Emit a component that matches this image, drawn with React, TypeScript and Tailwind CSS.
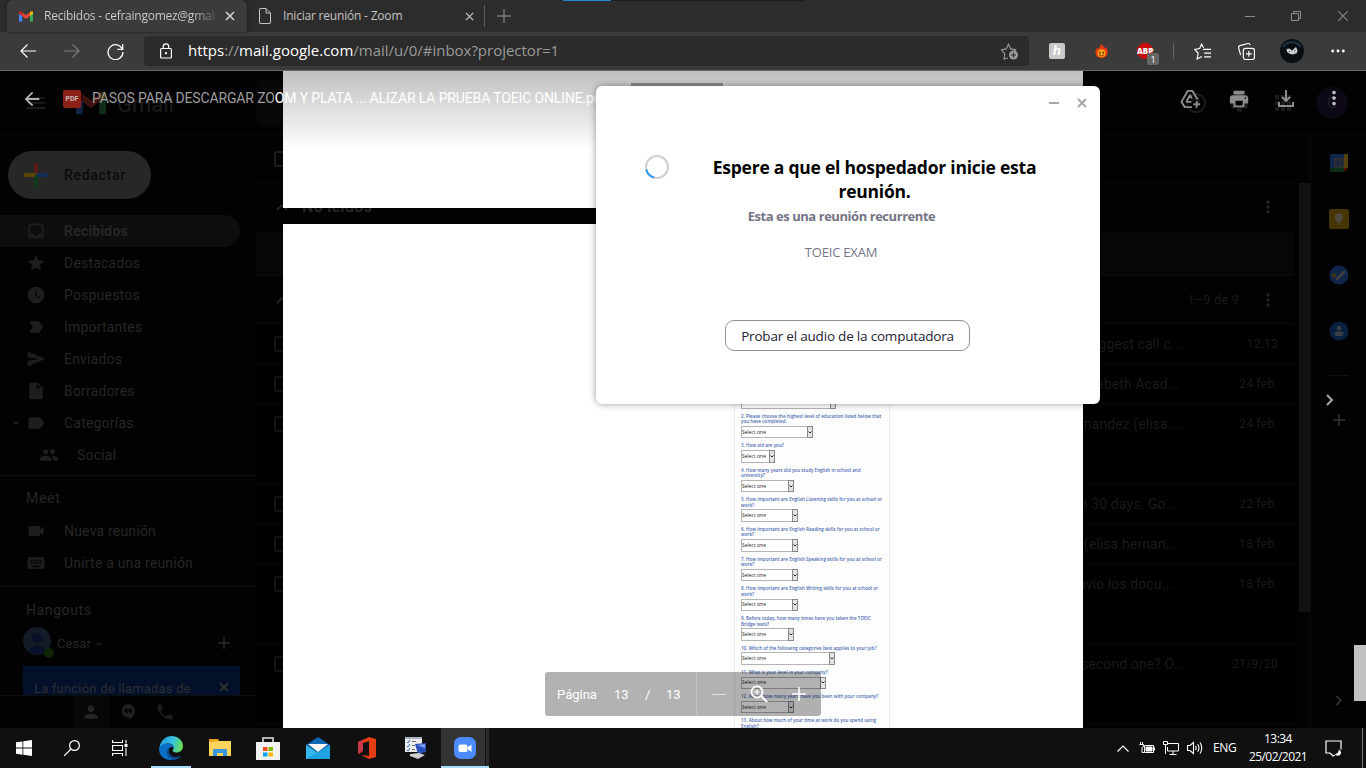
import React from "react";
import type { ReactNode } from "react";
import {
  MdApps, MdArrowDropDown, MdInbox, MdInsertDriveFile, MdKeyboard, MdLabel,
  MdLabelImportant, MdLightbulb, MdMoreVert, MdPeople, MdPerson, MdPhone, MdPrint, MdSend, MdSettings,
  MdStar, MdVideocam, MdWatchLater, MdHelpOutline, MdMenu, MdArrowBack,
} from "react-icons/md";

const ui = "font-['Open_Sans',sans-serif]";
const gm = "font-[Roboto,sans-serif]";

function GmailM({ className }: { className: string }) {
  return (
    <svg viewBox="0 0 16 12" className={className}>
      <path d="M0 2v9a1 1 0 0 0 1 1h2.6V4.5z" fill="#4285f4" />
      <path d="M16 2v9a1 1 0 0 1-1 1h-2.6V4.5z" fill="#34a853" />
      <path d="M12.4 1.2v4.3L16 2.8V1.5A1.4 1.4 0 0 0 13.6.4z" fill="#fbbc04" />
      <path d="M3.6 5.5V1.2L8 4.5l4.4-3.3v4.3L8 8.8z" fill="#ea4335" />
      <path d="M0 1.5v1.3l3.6 2.7V1.2L2.4.4A1.4 1.4 0 0 0 0 1.5z" fill="#c5221f" />
    </svg>
  );
}

function Cross({ className, w = 1.4 }: { className: string; w?: number }) {
  return (
    <svg viewBox="0 0 10 10" className={className} fill="none" stroke="currentColor" strokeWidth={w}>
      <path d="M1 1l8 8M9 1L1 9" />
    </svg>
  );
}

function TabStrip() {
  return (
    <div className={`${ui} relative flex h-8 bg-[#2c2c2c] pl-[7px] text-[12px] tracking-[-0.2px] text-[#c4c4c4]`}>
      <div className="absolute left-[563px] top-0 h-px w-12 bg-[#2488d0]" />
      <div className="absolute left-[611px] top-0 h-px w-[193px] bg-[#1c1c1c]" />
      <div className="flex w-60 items-center rounded-t-md bg-[#3b3b3b] pl-3 shadow-[0_0_3px_#1a1a1a]">
        <GmailM className="h-[11px] w-[14px]" />
        <span className="ml-[11px] w-[175px] overflow-hidden whitespace-nowrap bg-gradient-to-r from-[#d0d0d0] from-85% to-[#444] bg-clip-text tracking-[-0.25px] text-transparent">
          Recibidos - cefraingomez@gmai
        </span>
        <Cross className="ml-[6px] size-[10px] text-[#e0e0e0]" />
      </div>
      <div className="flex w-[238px] items-center border-r border-[#5c5c5c] pl-3 [border-image:linear-gradient(transparent_6px,#5c5c5c_6px,#5c5c5c_26px,transparent_26px)_1]">
        <svg viewBox="0 0 12 16" className="h-4 w-3 fill-none stroke-[#c4c4c4]">
          <path d="M.5 2A1.3 1.3 0 0 1 2 .5h5L11.500 5v9a1.300 1.300 0 0 1-1.500 1.500H2A1.300 1.300 0 0 1 .5 14zM7 .5V5h4.500" />
        </svg>
        <span className="ml-3 w-[182px]">Iniciar reunión - Zoom</span>
        <Cross className="size-[9px] text-[#c4c4c4]" />
      </div>
      <svg viewBox="0 0 14 14" className="ml-[12px] mt-[9px] size-[14px] stroke-[#999]"><path d="M7 0v14M0 7h14" /></svg>
      <div className="ml-auto flex items-center pr-[17px] text-[#8d8d8d]">
        <svg viewBox="0 0 10 10" className="mr-9 size-[10px] stroke-current"><path d="M0 5.500h10" /></svg>
        <svg viewBox="0 0 10 10" className="mr-9 size-[10px] fill-none stroke-current"><path d="M.5 2.500h7v7h-7zM2.500 2.500v-2h7v7h-2" /></svg>
        <Cross className="size-[12px]" w={0.9} />
      </div>
    </div>
  );
}

function Toolbar() {
  return (
    <div className={`${ui} flex h-[39px] items-center border-b border-[#666] bg-[#3b3b3b] text-white`}>
      <svg viewBox="0 0 16 16" className="ml-5 size-4 fill-none stroke-white"><path d="M16 8H1M7.500 1.500L1 8l6.500 6.500" strokeWidth="1.200" /></svg>
      <svg viewBox="0 0 16 16" className="ml-7 size-4 fill-none stroke-[#7c7c7c]"><path d="M0 8h15M8.500 1.500L15 8l-6.500 6.500" strokeWidth="1.200" /></svg>
      <svg viewBox="0 0 16 16" className="ml-[27px] size-[17px] fill-none stroke-white"><path d="M14.500 6A7 7 0 1 0 15 8.500M14.800 1v5H9.800" strokeWidth="1.200" /></svg>
      <div className="ml-5 flex h-[30px] w-[885px] items-center rounded bg-[#2b2b2b]">
        <svg viewBox="0 0 12 16" className="ml-4 h-4 w-3 fill-none stroke-white">
          <rect x=".6" y="5.500" width="10.800" height="9.500" rx="1" strokeWidth="1.200" />
          <path d="M3.300 5.500V3.500a2.700 2.700 0 0 1 5.400 0v2" strokeWidth="1.200" /><rect x="5.500" y="9.700" width="1" height="1" />
        </svg>
        <div className="mb-[2px] ml-4 whitespace-nowrap text-[15px] tracking-[-0.01px]">
          https<span className="text-[#9a9a9a]">://</span>mail.google.com<span className="text-[#9a9a9a]">/mail/u/0/#inbox?projector=1</span>
        </div>
        <svg viewBox="0 0 18 17" className="ml-auto mr-[10px] h-[17px] w-[18px] fill-none stroke-[#9a9a9a]">
          <path d="M7 15l-4 1 .8-5L.5 6.700l4.700-.8L7.500 1l2.200 4.900 5 .8-2 2" strokeWidth="1.100" />
          <circle cx="12.500" cy="12" r="4.500" className="fill-[#9a9a9a] stroke-none" /><path d="M12.500 9.500v5M10 12h5" className="stroke-[#2b2b2b]" />
        </svg>
      </div>
      <div className="ml-5 grid size-4 place-items-center rounded-[2px] bg-[#c8c8c8] pb-0.5 font-['Liberation_Serif'] text-[15px] font-bold italic leading-none">h</div>
      <svg viewBox="0 0 14 16" className="ml-[30px] h-4 w-[13px]">
        <path d="M6 0c3 3 4 4 5 5l1-1c2 3 2 5 1.500 7-1 3-3.500 4.500-6.500 4.500S1 14 .5 11C0 8 1.500 5.500 3 4l.8 2C5.500 4 6 2 6 0z" fill="#e8380d" />
        <circle cx="7" cy="10.500" r="4.300" fill="#f9a11b" /><circle cx="5.200" cy="9.800" r=".9" fill="#5b2108" /><circle cx="8.900" cy="9.800" r=".9" fill="#5b2108" />
        <path d="M4.500 12c1.500 1.700 3.500 1.700 5 0" stroke="#5b2108" fill="none" />
      </svg>
      <div className="relative ml-[29px] grid size-4 place-items-center">
        <svg viewBox="0 0 16 16" className="absolute size-4"><path d="M5 0h6l5 5v6l-5 5H5l-5-5V5z" fill="#c70d0d" /></svg>
        <span className="relative text-[8px] font-extrabold leading-none">ABP</span>
        <span className="absolute left-[10px] top-[10px] grid h-3 w-3 place-items-center rounded-[2px] bg-[#666] text-[9px] leading-none">1</span>
      </div>
      <div className="ml-5 h-4 w-px bg-[#666]" />
      <svg viewBox="0 0 16 16" className="ml-5 size-[17px] fill-none stroke-white"><path d="M9 4.500L7.200 1 5.300 5.200.6 6l3.300 3.400L3 15l4.500-2.300M8.500 6H16M9.500 9.500H16M9.500 13H16" strokeWidth="1.100" /></svg>
      <svg viewBox="0 0 16 16" className="ml-[27px] size-[17px] fill-none stroke-white"><rect x="5" y="5" width="10.500" height="10.500" rx="2" strokeWidth="1.100" /><path d="M10.200 7.500v5.500M7.500 10.200H13M2.500 11.500L.6 4.500Q.4 3 1.800 2.500L9.500.5q1.500-.2 2 1.500" strokeWidth="1.100" /></svg>
      <svg viewBox="0 0 24 24" className="ml-[25px] size-6">
        <circle cx="12" cy="12" r="12" fill="#080d12" /><path d="M3 8A11 11 0 0 1 21 8" stroke="#223541" strokeWidth="2" fill="none" />
        <path d="M6.500 10l3-.5 2.500 2 4-3.500 1.500 3-.5 3-4 1.500-3-.5-3-2z" fill="#c9cccd" /><path d="M9 12.500h1M14 12l1.500-.5" stroke="#555" />
      </svg>
      <svg viewBox="0 0 14 4" className="ml-[27px] h-1 w-[14px] fill-white"><circle cx="1.700" cy="2" r="1.400" /><circle cx="7" cy="2" r="1.400" /><circle cx="12.300" cy="2" r="1.400" /></svg>
    </div>
  );
}

const folders: [ReactNode, string][] = [
  [<MdInbox />, "Recibidos"], [<MdStar />, "Destacados"], [<MdWatchLater />, "Pospuestos"], [<MdLabelImportant />, "Importantes"],
  [<MdSend />, "Enviados"], [<MdInsertDriveFile />, "Borradores"], [<MdLabel />, "Categorías"],
];

function Row({ icon, label, on }: { icon: ReactNode; label: string; on?: boolean }) {
  return (
    <div className={`flex h-8 w-60 shrink-0 items-center rounded-r-full pl-[26px] ${on ? "bg-[#0d0d0d] font-bold" : ""}`}>
      <span className="text-[20px] text-[#1e1e1e]">{icon}</span>
      <span className="ml-[18px] whitespace-nowrap">{label}</span>
    </div>
  );
}

function Sidebar() {
  return (
    <div className={`${gm} flex w-64 shrink-0 flex-col text-[14px] tracking-[0.2px] text-[#262626]`}>
      <div className="ml-2 mt-4 flex h-12 w-[143px] shrink-0 items-center rounded-full bg-[#272727] pl-4 text-[#0b0b0b]">
        <svg viewBox="0 0 24 24" className="size-6"><path d="M10 0h4v12h-4z" fill="#5b1814" /><path d="M12 10h12v4H12z" fill="#142d57" /><path d="M10 12h4v12h-4z" fill="#0f3a1c" /><path d="M0 10h13l-3 4H0z" fill="#5a4404" /></svg>
        <span className="ml-4 font-medium tracking-[0.7px]">Redactar</span>
      </div>
      <div className="mt-4">
        {folders.map(([icon, label], i) => (
          <div key={label} className="relative">
            <Row icon={icon} label={label} on={i === 0} />
            {i === 6 && <MdArrowDropDown className="absolute left-[8px] top-2 text-[16px] text-[#202020]" />}
          </div>
        ))}
        <div className="flex h-8 items-center pl-[39px]"><MdPeople className="text-[20px] text-[#1e1e1e]" /><span className="ml-[18px]">Social</span></div>
      </div>
      <div className="mt-1 h-px shrink-0 bg-[#0d0d0d]" />
      <div className="flex h-[39px] shrink-0 items-center pl-[26px] pt-[6px] tracking-[0.7px]">Meet</div>
      <Row icon={<MdVideocam />} label="Nueva reunión" />
      <Row icon={<MdKeyboard />} label="Unirte a una reunión" />
      <div className="mt-[7px] h-px shrink-0 bg-[#0d0d0d]" />
      <div className="flex h-9 shrink-0 items-center pl-[26px] pt-[10px] tracking-[0.6px]">Hangouts</div>
      <div className="mt-1 flex h-7 shrink-0 items-center pl-[23px]">
        <div className="relative grid size-7 place-items-center rounded-full bg-[#141a26]">
          <svg viewBox="0 0 28 28" className="size-7"><circle cx="14" cy="11" r="5" fill="#08102a" /><path d="M5 23q9-9 18 0-9 9-18 0z" fill="#08102a" /></svg>
          <span className="absolute left-[21px] top-[21px] size-[10px] rounded-full bg-[#0d2405]" />
        </div>
        <span className="ml-[6px] mt-[5px] text-[13px] tracking-[0.1px]">Cesar</span><MdArrowDropDown className="mt-[5px] text-[16px] text-[#181818]" />
        <svg viewBox="0 0 12 12" className="ml-[111px] mt-1 size-3 stroke-[#2a2a2a]" strokeWidth="1.500"><path d="M6 0v12M0 6h12" /></svg>
      </div>
      <div className="ml-[23px] mt-[11px] flex h-[29px] w-[217px] shrink-0 items-start justify-between bg-[#03102a] px-[11px] pt-[13px] text-[13px] text-[#2c2f36]">
        <span className="h-4 leading-[19px]">La función de llamadas de</span><Cross className="mt-[3px] size-[10px] text-[#303030]" w={1.8} />
      </div>
      <div className="flex flex-1 border-t border-[#0d0d0d] pl-[73px] text-[20px] text-[#262626]">
        <div className="grid w-9 place-items-center bg-[#070707]"><MdPerson /></div>
        <div className="grid w-[37px] place-items-center">
          <svg viewBox="0 0 14 16" className="h-4 w-[14px]"><path d="M7 0a7 7 0 0 1 7 7c0 4-3 7-6 9v-2.500A6.700 6.700 0 0 1 7 0z" fill="#202020" /><path d="M3.500 5h3v4L5 10V8H3.500zM7.800 5h3v4L9.300 10V8H7.800z" fill="#020202" /></svg>
        </div>
        <div className="grid w-[37px] place-items-center text-[#1c1c1c]"><MdPhone /></div>
      </div>
    </div>
  );
}

const mails: [string, string, string, string][] = [
  ["suggest call c...", "12:13", "h-10", "mr-[112px]"],
  ["Elizabeth Acad...", "24 feb.", "h-10", "mr-[115px]"],
  ["Hernandez (elisa....", "24 feb.", "h-20", "mr-[111px]"],
  ["in 30 days. Go...", "22 feb.", "h-10", "mr-[117px]"],
  ["(elisa.hernan...", "18 feb.", "h-10", "mr-[117px]"],
  ["Envío los docu...", "18 feb.", "h-20", "mr-[121px]"],
  ["second one? O...", "21/9/20", "h-20", "mr-[109px]"],
];

const Box = ({ c }: { c: string }) => <div className={`ml-[18px] size-4 rounded-[2px] border-2 ${c}`} />;
const Up = () => <svg viewBox="0 0 12 8" className="ml-5 h-2 w-3 fill-none stroke-[#242424]" strokeWidth="1.800"><path d="M1 7l5-5 5 5" /></svg>;

function MailList() {
  return (
    <div className={`${gm} flex w-[1038px] flex-col text-[14px] text-[#1a1a1a]`}>
      <div className="flex h-12 items-center border-b border-[#0a0a0a]"><Box c="border-[#1c1c1c]" /></div>
      <div className="flex h-12 items-center"><Up /><span className="ml-[14px] text-[16px] font-medium tracking-[0.3px] text-[#2a2a2a]">No leídos</span><MdMoreVert className="ml-auto mr-4 text-[20px] text-[#242424]" /></div>
      <div className="h-[45px] border-b border-[#0d0d0d] bg-[#060606]" />
      <div className="flex h-12 items-center border-b border-[#0a0a0a]"><Up /><span className="ml-auto mr-[19px] text-[12px] tracking-[0.5px]">1–9 de 9</span><MdMoreVert className="mr-4 text-[20px] text-[#242424]" /></div>
      {mails.map(([t, d, h, m], i) => (
        <div key={i} className={`${h} shrink-0 border-b border-[#090909] bg-black`}>
          <div className="flex h-10 items-center">
            <Box c="border-[#121212]" />
            <div className="flex flex-1 justify-end whitespace-nowrap tracking-[0.1px]"><span className={m}>{t}</span></div>
            <span className="absolute left-[1180px] w-[98px] text-right text-[12px] tracking-[0.3px]">{d}</span>
          </div>
        </div>
      ))}
    </div>
  );
}

function SidePanel() {
  return (
    <div className="relative flex w-14 flex-col items-center border-l border-[#0c0c0c] pt-[18px]">
      <svg viewBox="0 0 20 20" className="size-5"><path d="M1 1h14v4H5v14H1z" fill="#10254a" /><path d="M15 1h4v14h-4z" fill="#54400a" /><path d="M1 15h14v4H1z" fill="#0c2e14" /><path d="M15 15h4l-4 4z" fill="#4a100c" /><path d="M5 5h10v10H5z" fill="#2b2e33" /><text x="10" y="13" textAnchor="middle" fontSize="8" fontFamily="Roboto" fontWeight="700" fill="#0d2347">31</text></svg>
      <div className="mt-9 grid size-5 place-items-center rounded-[2px] bg-[#463502] text-[14px] text-[#4d4a42]"><MdLightbulb /></div>
      <svg viewBox="0 0 20 20" className="mt-9 size-5"><circle cx="10" cy="10" r="9.500" fill="#10254a" /><circle cx="5" cy="10.500" r="2" fill="#4a3606" /><path d="M8 14l7-7" stroke="#3c3c3c" strokeWidth="3" strokeLinecap="round" /></svg>
      <svg viewBox="0 0 20 20" className="mt-9 size-5"><circle cx="10" cy="10" r="9.500" fill="#072040" /><circle cx="10" cy="7" r="2.300" fill="#3a3f45" /><rect x="5.500" y="10.500" width="9" height="4.500" rx="2.200" fill="#3a3f45" /></svg>
      <div className="mt-[34px] h-px w-5 bg-[#111]" />
      <div className="mt-[18px] w-full pl-[15px]"><svg viewBox="0 0 8 12" className="h-3 w-2 fill-none stroke-[#a8a8a8]" strokeWidth="2"><path d="M1 1l5 5-5 5" /></svg></div>
      <svg viewBox="0 0 12 12" className="mt-2 size-3 stroke-[#333]" strokeWidth="1.500"><path d="M6 0v12M0 6h12" /></svg>
      <svg viewBox="0 0 8 12" className="mb-[22px] mt-auto h-[11px] w-2 fill-none stroke-[#333]" strokeWidth="1.800"><path d="M1 1l5 5-5 5" /></svg>
    </div>
  );
}

const questions: [string[], string][] = [
  [["2. Please choose the highest level of education listed below that", "you have completed."], "w-[72px]"],
  [["3. How old are you?"], "w-[34px]"],
  [["4. How many years did you study English in school and", "university?"], "w-[53px]"],
  [["5. How important are English Listening skills for you at school or", "work?"], "w-[57px]"],
  [["6. How important are English Reading skills for you at school or", "work?"], "w-[57px]"],
  [["7. How important are English Speaking skills for you at school or", "work?"], "w-[57px]"],
  [["8. How important are English Writing skills for you at school or", "work?"], "w-[57px]"],
  [["9. Before today, how many times have you taken the TOEIC", "Bridge tests?"], "w-[53px]"],
  [["10. Which of the following categories best applies to your job?"], "w-[94px]"],
  [["11. What is your level in your company?"], "w-[85px]"],
  [["12. About how many years have you been with your company?"], "w-[53px]"],
  [["13. About how much of your time at work do you spend using", "English?"], ""],
];

function SelectBox({ w }: { w: string }) {
  return (
    <div className={`${w} mb-[5px] mt-[1.2px] flex h-[12.5px] items-center justify-between border border-[#b4b4b4] bg-white text-[5px] leading-none text-[#222]`}>
      Select one
      <span className="-my-px -mr-px grid h-[12.5px] w-[6px] place-items-center border border-[#888] bg-[#e4e4e4]">
        <svg viewBox="0 0 4 3" className="h-[3px] w-1 fill-none stroke-[#222]"><path d="M.5.5L2 2 3.500.5" /></svg>
      </span>
    </div>
  );
}

function PdfPages() {
  return (
    <div className="absolute left-[283px] top-0 flex h-full w-[800px] flex-col gap-4 overflow-hidden">
      <div className="h-[137px] shrink-0 bg-white"><div className="ml-[348px] h-5 w-[92px] translate-y-3 bg-[#b0b0b0]" /></div>
      <div className="flex-1 overflow-hidden bg-white">
        <div className="ml-[451px] mt-[100px] h-[500px] w-[155.500px] border-x border-[#ececec] bg-[#fdfdfd] pl-[6px] pt-[71px] font-['Open_Sans',sans-serif]">
          <SelectBox w="w-[95px]" />
          {questions.map(([lines, w]) => (
            <div key={lines[0]}>
              {lines.map((l) => <div key={l} className="h-[5.500px] whitespace-nowrap text-[4.570px] font-semibold leading-[5.500px] text-[#4a6ab4]">{l}</div>)}
              {w && <SelectBox w={w} />}
            </div>
          ))}
        </div>
      </div>
    </div>
  );
}

function ViewerChrome() {
  return (
    <>
      <div className={`${gm} absolute inset-x-0 top-0 flex h-[78px] items-start bg-gradient-to-b from-black/25 to-transparent`}>
        <MdArrowBack className="ml-[21px] mt-[17px] text-[22px] text-[#b0b0b0]" />
        <div className="ml-5 mt-[19px] grid size-[18px] place-items-center rounded-[2px] bg-[#8d2119] text-[7px] font-bold text-[#c8bcbc]">PDF</div>
        <div className="ml-[11px] mt-[17px] whitespace-nowrap text-[14px] leading-[21px] tracking-[-0.14px] text-white">
          <span className="text-[#9c9c9c]">PASOS PARA DESCARGAR ZO</span>OM Y PLATA ... ALIZAR LA PRUEBA TOEIC ONLINE.pdf
        </div>
        <div className="ml-auto mr-[22px] mt-[18px] flex items-center gap-[25px] text-[22px] text-[#8c8c8c]">
          <svg viewBox="0 0 24 22" className="h-[21px] w-6 fill-none stroke-current" strokeWidth="2" strokeLinejoin="round">
            <path d="M13 19H5.500L2 13.500 8.500 2h5L19 11M7 13.500h5.500M7 13.500l4-7 2 3.500M18 12.500v7M14.500 16h7" />
          </svg>
          <MdPrint className="mt-[-2px]" />
          <svg viewBox="0 0 18 18" className="mx-[2px] mt-[-2px] size-[18px] fill-none stroke-current" strokeWidth="2"><path d="M9 0v11M5 7l4 4 4-4M2 12v4h14v-4" /></svg>
          <MdMoreVert className="ml-[1px] mr-[-1px] mt-[-3px] text-[#c0c0c0]" />
        </div>
      </div>
      <div className={`${gm} absolute left-[545px] top-[601px] flex h-11 w-[276px] items-center rounded-[3px] bg-black/30 text-[13px] text-white`}>
        <span className="ml-3 w-[57px] pt-px">Página</span><span className="w-[31px] pt-px">13</span><span className="w-[21px] pt-px">/</span><span className="w-[30px] pt-px">13</span>
        <span className="h-full w-px bg-white/20" />
        <span className="ml-[15px] h-px w-[14px] bg-white/60" />
        <svg viewBox="0 0 18 18" className="ml-[24px] size-[18px] fill-none stroke-white" strokeWidth="1.800"><circle cx="7" cy="7" r="5.600" /><path d="M11 11l6 6" strokeWidth="2.200" /><path d="M7 4.500v5M4.500 7h5" strokeWidth="1.200" /></svg>
        <svg viewBox="0 0 14 14" className="ml-[24px] size-[14px] stroke-white" strokeWidth="1.600"><path d="M7 0v14M0 7h14" /></svg>
      </div>
      <div className="absolute left-[1354px] top-[574px] h-14 w-3 bg-[#c1c1c1]" />
    </>
  );
}

function ZoomDialog() {
  return (
    <div className={`${ui} absolute left-[596px] top-[86px] flex h-[318px] w-[504px] flex-col rounded-md bg-white shadow-[0_0_7px_rgba(0,0,0,0.4)]`}>
      <div className="flex h-[34px] items-center justify-end pr-[13px] text-[#a6a6a6]">
        <div className="mr-[18px] h-[2px] w-[10px] bg-[#a9a9a9]" /><Cross className="size-[10px]" w={2} />
      </div>
      <div className="mt-[35px] flex">
        <svg viewBox="0 0 24 24" className="ml-[49px] size-6 fill-none" strokeWidth="2"><circle cx="12" cy="12" r="11" stroke="#d0d0d0" /><path d="M1.300 14.500A11 11 0 0 0 9 22.600" stroke="#2d9bf5" /></svg>
        <h1 className="ml-[33px] w-[345px] whitespace-nowrap text-center text-[17.500px] font-bold leading-6 tracking-[-0.24px] text-black">Espere a que el hospedador inicie esta<br />reunión.</h1>
      </div>
      <p className="ml-[-13px] mt-[4px] text-center text-[13px] font-bold leading-[18px] tracking-[-0.45px] text-[#747487]">Esta es una reunión recurrente</p>
      <p className="ml-[-14px] mt-[18px] text-center text-[13px] leading-[18px] tracking-[-0.2px] text-[#747487]">TOEIC EXAM</p>
      <button className="ml-[129px] mt-[59px] h-[31px] w-[245px] rounded-[9px] border border-[#909096] pt-[2px] text-[13.500px] leading-none tracking-[-0.2px] text-[#232333]">Probar el audio de la computadora</button>
    </div>
  );
}

function Taskbar() {
  const slot = "grid w-12 place-items-center";
  return (
    <div className={`${ui} flex h-10 bg-[#101010] text-[12px] text-white`}>
      <div className={slot}><svg viewBox="0 0 16 16" className="size-4 fill-white"><path d="M0 2.300l6.500-.9v6.200H0zM7.300 1.300L16 0v7.600H7.300zM0 8.400h6.500v6.300L0 13.800zM7.300 8.400H16V16l-8.700-1.200z" /></svg></div>
      <div className={slot}><svg viewBox="0 0 16 16" className="size-4 fill-none stroke-white" strokeWidth="1.200"><circle cx="10.500" cy="5.500" r="4.900" /><path d="M7 9L0 16" /></svg></div>
      <div className={slot}><svg viewBox="0 0 16 16" className="size-4 fill-none stroke-white" strokeWidth="1.100"><path d="M.6 0v2.500h9.900V0M.6 16v-2.500h9.900V16M.6 5.500h9.900v5H.6zM14 0v3.500M14 8v8" /><path d="M12.500 5.500h3" strokeWidth="3" /></svg></div>
      <div className="ml-[7px] grid w-10 place-items-center border-b-2 border-[#a9dcfa] pt-[2px]">
        <svg viewBox="0 0 24 24" className="size-6">
          <defs><linearGradient id="eg" x1="0" x2="1" y1=".3" y2=".5"><stop stopColor="#1c9ad8" /><stop offset=".55" stopColor="#35c1e0" /><stop offset="1" stopColor="#6be04f" /></linearGradient></defs>
          <path d="M1 9C3 3 8 0 12.500 0 19 0 24 4.500 24 10c0 4-3 6.500-6.500 6.500-3 0-4-1.200-3.800-2 .1-.6 1-1 1-2.700C14.700 9 12 7.500 9 7.500 5 7.500 2 10 0 14z" fill="url(#eg)" />
          <path d="M0 13C1 9 4.500 7.500 8.500 7.500c3 0 6 1.500 6.200 4.300-1-1.200-4-1-5 1.200-1.500 4 1.500 8.500 6.500 8.500 3 0 4.500-1 6-1.900C20 22.500 16.500 24 12 24 5 24 0 19.500 0 13z" fill="#0c6fc6" />
          <path d="M8 13c-2 5 2 10.500 7 10.700 3-.4 6-2 7.500-4-4 2.500-9 2-11.500-1-1.500-2-1.700-4.500-.5-6.500C9.500 12 8.500 12 8 13z" fill="#0b4f9c" />
        </svg>
      </div>
      <div className="ml-[5px] grid w-12 place-items-center"><svg viewBox="0 0 22 20" className="h-5 w-[22px]"><path d="M0 1h9l1 2v3H0z" fill="#e8a317" /><path d="M0 4l10-1h12v15H0z" fill="#ffd35c" /><path d="M4 18v-6q0-1 1-1h12q1 0 1 1v6h-4v-3H8v3z" fill="#3a96dd" /></svg></div>
      <div className={slot}><svg viewBox="0 0 24 24" className="size-6"><path d="M7 8V2h10v6" fill="none" stroke="#e8e8e8" strokeWidth="1.500" /><path d="M0 6h24v18H0z" fill="#f1f1f1" /><path d="M7 11h4.500v4H7z" fill="#f25022" /><path d="M12.500 11H17v4h-4.500z" fill="#7fba00" /><path d="M7 16.500h4.500v4H7z" fill="#00a4ef" /><path d="M12.500 16.500H17v4h-4.500z" fill="#ffb900" /></svg></div>
      <div className="ml-[2px] grid w-12 place-items-center"><svg viewBox="0 0 24 22" className="h-[22px] w-6"><path d="M0 8l12-8 12 8-12 8z" fill="#1066b5" /><path d="M2 7h20l-10 8z" fill="#f4f4f4" /><path d="M0 8l12 8 12-8v14H0z" fill="#33b8ef" /><path d="M0 22L24 8v14z" fill="#1fa2e0" /></svg></div>
      <div className={slot}><svg viewBox="0 0 18 22" className="ml-px h-[22px] w-[18px]"><path d="M0 5l11-5 7 2v18l-7 2L3 18l8 1V4L4 6.500V15l-4 2z" fill="#e33b12" /><path d="M0 5l5-2.300V14l-5 3z" fill="#c7384c" /></svg></div>
      <div className={slot}><svg viewBox="0 0 22 22" className="ml-1 size-[22px]"><path d="M0 0h17v15H0z" fill="#ececec" /><path d="M0 0h17v2H0z" fill="#a9b4c2" /><path d="M2 5l1 1 2-3M2 9l1 1 2-3M2 13l1 1 2-3" fill="none" stroke="#2e68ad" /><path d="M7 4.500h4M7 8.500h3M7 12.500h3" stroke="#777" /><path d="M10 7l11-1v9l-8 2z" fill="#2b50bd" /><path d="M12 8l8-1v4z" fill="#7da0ee" /><path d="M5 17l9-1 6 2-7 4-8-3z" fill="#d0d0d0" /></svg></div>
      <div className="ml-[3px] flex w-12 border-b-2 border-[#a9dcfa]">
        <div className="grid w-11 place-items-center bg-[#333] pl-[3px] pt-[2px]"><svg viewBox="0 0 22 22" className="size-[22px]"><rect width="22" height="22" rx="6.500" fill="#4a8cff" /><rect x="4.500" y="7.500" width="9" height="7.500" rx="1.800" fill="#fff" /><path d="M14 10l3.500-2.500v7.500L14 12.500z" fill="#fff" /></svg></div>
        <div className="flex-1 border-l border-[#111] bg-[#292929]" />
      </div>
      <div className="ml-auto flex items-center">
        <svg viewBox="0 0 12 7" className="h-[7px] w-3 fill-none stroke-white" strokeWidth="1.200"><path d="M.5 6.500L6 1l5.500 5.500" /></svg>
        <svg viewBox="0 0 16 12" className="ml-[10px] h-3 w-4 fill-none stroke-white"><path d="M5.500 3.500h9v7h-9zM15.500 5.500v3M1.500 0v2M3.500 0v2M.5 2.500h4v2l-1.500 1v5h2" /><path d="M7 5h6v4H7z" fill="#fff" /></svg>
        <svg viewBox="0 0 16 14" className="ml-2 h-[14px] w-4 fill-none stroke-white"><path d="M5 2.500h10.500v7.500h-11V6M10 10v3M6.500 13.500h7M.5.500h4v3h-4zM2.500 4v9" /></svg>
        <svg viewBox="0 0 17 14" className="ml-2 h-[14px] w-[17px] fill-none stroke-white" strokeWidth="1.100"><path d="M.5 4.500h2.500l3.500-3v11L3 9.500H.5zM8.500 5q1.200 2 0 4M10.700 3.200q2.500 3.800 0 7.600M13 1.500q3.500 5.500 0 11" /></svg>
        <span className="ml-[9px] w-6 tracking-[-0.3px]">ENG</span>
        <div className="ml-[9px] w-[64px] text-center leading-[18px] tracking-[-0.55px]"><div>13:34</div><div className="whitespace-nowrap">25/02/2021</div></div>
        <svg viewBox="0 0 17 17" className="ml-[15px] size-[17px] fill-none stroke-white" strokeWidth="1.200"><path d="M5 13H1V1h15v8.500" /><path d="M5 13l3 3 2-1" /><path d="M13.500 9.500q1 3-3.500 5 4 3 6-1 .5-3-2.500-4z" fill="#fff" stroke="none" /></svg>
        <div className="ml-[20px] mr-[3px] h-10 w-px bg-[#777]" />
      </div>
    </div>
  );
}

export default function App() {
  return (
    <div className="relative flex h-[768px] w-[1366px] flex-col overflow-hidden bg-black">
      <TabStrip />
      <Toolbar />
      <div className="relative flex h-[657px] flex-col overflow-hidden bg-[#020202]">
        <div className={`${gm} flex h-16 shrink-0 items-center border-b border-[#0a0a0a] text-[20px] text-[#202020]`}>
          <MdMenu className="ml-[24px] text-[24px]" />
          <GmailM className="ml-[28px] h-6 w-[30px] opacity-30" />
          <span className="ml-[11px] w-[139px] pt-1 text-[22px]">Gmail</span>
          <div className="h-12 w-[720px] rounded-lg bg-[#080808]" />
          <div className="ml-auto mr-[18px] flex items-center gap-5">
            <MdHelpOutline className="text-[24px]" /><MdSettings className="text-[23px]" /><MdApps className="text-[24px]" />
            <div className="ml-[1px] grid size-8 place-items-center rounded-full bg-[#0e0918] text-[16px] text-[#2a2535]">C</div>
          </div>
        </div>
        <div className="flex flex-1">
          <Sidebar />
          <MailList />
          <div className="ml-[5px] mt-12 h-[429px] w-[11px] bg-[#121212]" />
          <SidePanel />
        </div>
        <PdfPages />
        <ViewerChrome />
      </div>
      <Taskbar />
      <ZoomDialog />
    </div>
  );
}
